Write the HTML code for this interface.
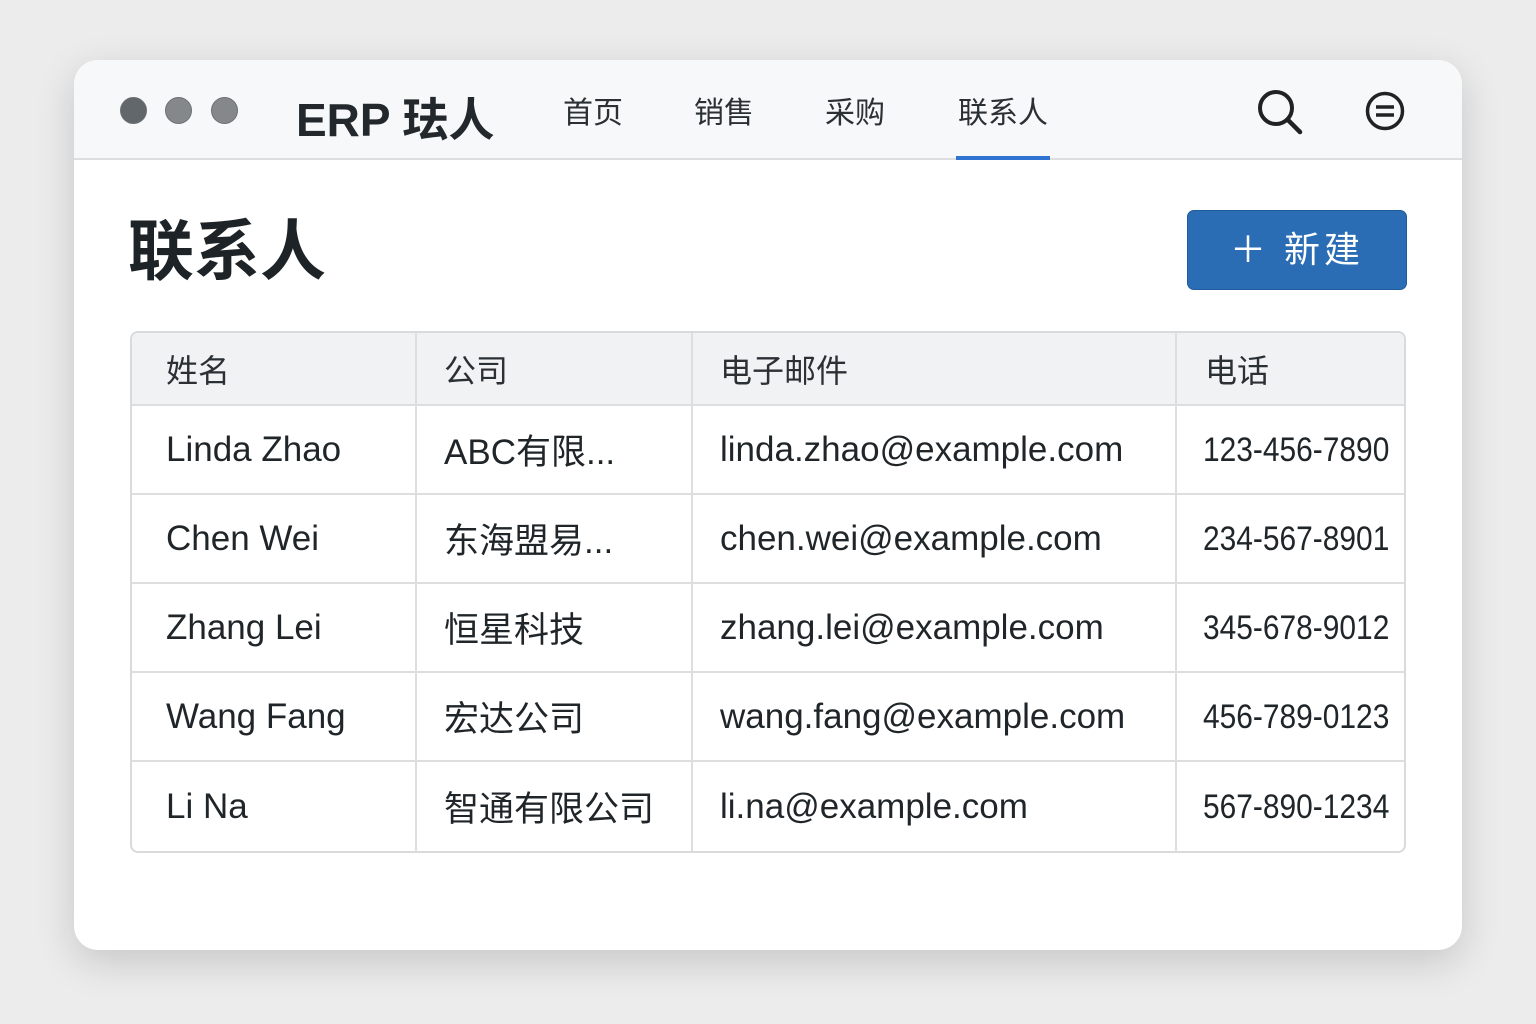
<!DOCTYPE html>
<html><head><meta charset="utf-8"><style>
*{margin:0;padding:0;box-sizing:border-box}
body{width:1536px;height:1024px;background:#ececec;font-family:"Liberation Sans","Noto Sans CJK SC",sans-serif;position:relative;overflow:hidden;color:#1f2528}
.win{position:absolute;left:74px;top:60px;width:1388px;height:890px;background:#fff;border-radius:24px;box-shadow:0 12px 40px rgba(0,0,0,.16);overflow:hidden}
.hdr{position:absolute;left:0;top:0;width:100%;height:100px;background:#f7f8f9;border-bottom:2px solid #dcdee0}
.dot{position:absolute;top:37px;width:27px;height:27px;border-radius:50%;background:#84888b;border:1px solid #6c7073}
.t{position:absolute;white-space:nowrap}
.nav{font-size:30px;color:#2b3034;top:28px}
table{position:absolute;left:56px;top:271px;width:1276px;border-collapse:separate;border-spacing:0;border:2px solid #d8dadc;border-radius:8px;overflow:hidden;table-layout:fixed}
td,th{border-right:2px solid #dcdee0;border-bottom:2px solid #dcdee0;font-weight:normal;text-align:left;padding-left:27px;font-size:35px;height:89px;white-space:nowrap}
td:first-child,th:first-child{padding-left:34px}
th{background:#f1f2f3;height:73px;font-size:32px;color:#2b3034}
tr td:last-child,tr th:last-child{border-right:none}
tr:last-child td{border-bottom:none}
td.p{padding-left:26px}
td.p span{display:inline-block;transform:scaleX(0.88);transform-origin:left center;font-size:34px}
</style></head><body>
<div class="win">
<div class="hdr">
<div class="dot" style="left:46px;background:#62676c"></div>
<div class="dot" style="left:91px"></div>
<div class="dot" style="left:137px"></div>
<div class="t" style="left:222px;top:24px;font-size:46px;font-weight:bold;color:#22282b">ERP 珐人</div>
<div class="t nav" style="left:489px">首页</div>
<div class="t nav" style="left:620px">销售</div>
<div class="t nav" style="left:751px">采购</div>
<div class="t nav" style="left:884px">联系人</div>
<div style="position:absolute;left:882px;top:96px;width:94px;height:4px;background:#2f74d0"></div>
<svg style="position:absolute;left:1182px;top:28px" width="50" height="50" viewBox="0 0 50 50"><circle cx="20" cy="20" r="16" fill="none" stroke="#222" stroke-width="4"/><line x1="32" y1="32" x2="44" y2="44" stroke="#222" stroke-width="4.5" stroke-linecap="round"/></svg>
<svg style="position:absolute;left:1290px;top:30px" width="42" height="42" viewBox="0 0 42 42"><circle cx="21" cy="21" r="17.5" fill="none" stroke="#222" stroke-width="3.5"/><line x1="12" y1="17" x2="30" y2="17" stroke="#222" stroke-width="3.5"/><line x1="12" y1="25" x2="30" y2="25" stroke="#222" stroke-width="3.5"/></svg>
</div>
<div class="t" style="left:54px;top:138px;font-size:66px;font-weight:bold;color:#1d2326">联系人</div>
<div style="position:absolute;left:1113px;top:150px;width:220px;height:80px;background:#2b6db4;border:1px solid #1f5a9c;border-radius:7px;color:#fff;font-size:36px;text-align:center;line-height:78px;letter-spacing:4px">＋ 新建</div>
<table>
<colgroup><col style="width:285px"><col style="width:276px"><col style="width:484px"><col></colgroup>
<tr><th>姓名</th><th>公司</th><th>电子邮件</th><th style="padding-left:28px">电话</th></tr>
<tr><td>Linda Zhao</td><td>ABC有限...</td><td>linda.zhao@example.com</td><td class="p"><span>123-456-7890</span></td></tr>
<tr><td>Chen Wei</td><td>东海盟易...</td><td>chen.wei@example.com</td><td class="p"><span>234-567-8901</span></td></tr>
<tr><td>Zhang Lei</td><td>恒星科技</td><td>zhang.lei@example.com</td><td class="p"><span>345-678-9012</span></td></tr>
<tr><td>Wang Fang</td><td>宏达公司</td><td>wang.fang@example.com</td><td class="p"><span>456-789-0123</span></td></tr>
<tr><td>Li Na</td><td>智通有限公司</td><td>li.na@example.com</td><td class="p"><span>567-890-1234</span></td></tr>
</table>
</div>
</body></html>
